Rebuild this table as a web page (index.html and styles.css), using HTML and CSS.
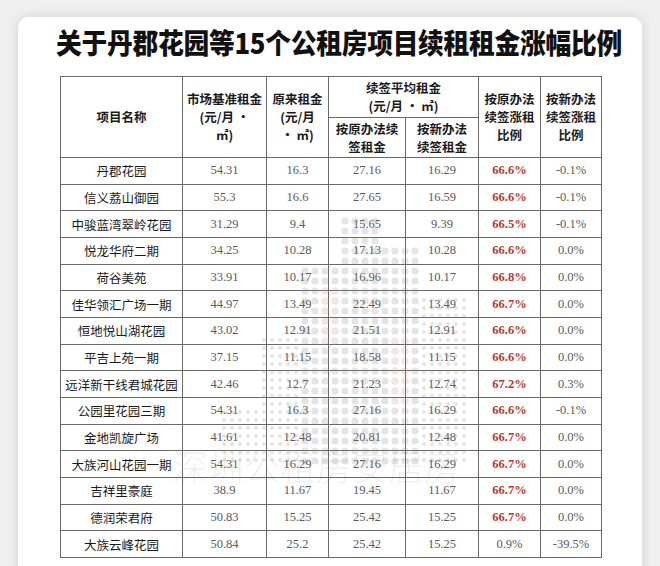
FILE: index.html
```html
<!DOCTYPE html>
<html lang="zh">
<head>
<meta charset="utf-8">
<link rel="stylesheet" href="styles.css">
</head>
<body>
<div class="card">
  <h1 class="title">关于丹郡花园等15个公租房项目续租租金涨幅比例</h1>
  <div class="table-wrap">
    <table class="rent">
      <colgroup>
        <col class="c1"><col class="c2"><col class="c3"><col class="c4"><col class="c5"><col class="c6"><col class="c7">
      </colgroup>
      <thead>
        <tr class="h1">
          <th rowspan="2">项目名称</th>
          <th rowspan="2">市场基准租金<br>(元/月 ·<br>㎡)</th>
          <th rowspan="2">原来租金<br>(元/月<br>· ㎡)</th>
          <th colspan="2">续签平均租金<br>(元/月 · ㎡)</th>
          <th rowspan="2">按原办法<br>续签涨租<br>比例</th>
          <th rowspan="2">按新办法<br>续签涨租<br>比例</th>
        </tr>
        <tr class="h2">
          <th>按原办法续<br>签租金</th>
          <th>按新办法<br>续签租金</th>
        </tr>
      </thead>
      <tbody>
        <tr><td class="name">丹郡花园</td><td>54.31</td><td>16.3</td><td>27.16</td><td>16.29</td><td class="red">66.6%</td><td>-0.1%</td></tr>
        <tr><td class="name">信义荔山御园</td><td>55.3</td><td>16.6</td><td>27.65</td><td>16.59</td><td class="red">66.6%</td><td>-0.1%</td></tr>
        <tr><td class="name">中骏蓝湾翠岭花园</td><td>31.29</td><td>9.4</td><td>15.65</td><td>9.39</td><td class="red">66.5%</td><td>-0.1%</td></tr>
        <tr><td class="name">悦龙华府二期</td><td>34.25</td><td>10.28</td><td>17.13</td><td>10.28</td><td class="red">66.6%</td><td>0.0%</td></tr>
        <tr><td class="name">荷谷美苑</td><td>33.91</td><td>10.17</td><td>16.96</td><td>10.17</td><td class="red">66.8%</td><td>0.0%</td></tr>
        <tr><td class="name">佳华领汇广场一期</td><td>44.97</td><td>13.49</td><td>22.49</td><td>13.49</td><td class="red">66.7%</td><td>0.0%</td></tr>
        <tr><td class="name">恒地悦山湖花园</td><td>43.02</td><td>12.91</td><td>21.51</td><td>12.91</td><td class="red">66.6%</td><td>0.0%</td></tr>
        <tr><td class="name">平吉上苑一期</td><td>37.15</td><td>11.15</td><td>18.58</td><td>11.15</td><td class="red">66.6%</td><td>0.0%</td></tr>
        <tr><td class="name">远洋新干线君城花园</td><td>42.46</td><td>12.7</td><td>21.23</td><td>12.74</td><td class="red">67.2%</td><td>0.3%</td></tr>
        <tr><td class="name">公园里花园三期</td><td>54.31</td><td>16.3</td><td>27.16</td><td>16.29</td><td class="red">66.6%</td><td>-0.1%</td></tr>
        <tr><td class="name">金地凯旋广场</td><td>41.61</td><td>12.48</td><td>20.81</td><td>12.48</td><td class="red">66.7%</td><td>0.0%</td></tr>
        <tr><td class="name">大族河山花园一期</td><td>54.31</td><td>16.29</td><td>27.16</td><td>16.29</td><td class="red">66.7%</td><td>0.0%</td></tr>
        <tr><td class="name">吉祥里豪庭</td><td>38.9</td><td>11.67</td><td>19.45</td><td>11.67</td><td class="red">66.7%</td><td>0.0%</td></tr>
        <tr><td class="name">德润荣君府</td><td>50.83</td><td>15.25</td><td>25.42</td><td>15.25</td><td class="red">66.7%</td><td>0.0%</td></tr>
        <tr><td class="name">大族云峰花园</td><td>50.84</td><td>25.2</td><td>25.42</td><td>15.25</td><td>0.9%</td><td>-39.5%</td></tr>
      </tbody>
    </table>
    <svg class="dots" width="260" height="250" viewBox="0 0 260 250" aria-hidden="true">
      <defs>
        <pattern id="dp" width="10" height="10" patternUnits="userSpaceOnUse">
          <circle cx="5" cy="5" r="3.6" fill="#8a8a8a"/>
        </pattern>
        <pattern id="dpr" width="10" height="10" patternUnits="userSpaceOnUse">
          <circle cx="5" cy="5" r="3.6" fill="#d08a80"/>
        </pattern>
        <pattern id="dps" width="8" height="8" patternUnits="userSpaceOnUse">
          <circle cx="4" cy="4" r="2" fill="#8a8a8a"/>
        </pattern>
      </defs>
      <rect x="120" y="0" width="40" height="250" fill="url(#dp)"/>
      <rect x="80" y="50" width="40" height="200" fill="url(#dp)"/>
      <rect x="100" y="70" width="20" height="60" fill="url(#dpr)"/>
      <rect x="160" y="30" width="40" height="220" fill="url(#dp)"/>
      <rect x="170" y="120" width="20" height="70" fill="url(#dpr)"/>
      <rect x="40" y="120" width="40" height="130" fill="url(#dps)"/>
      <rect x="200" y="80" width="48" height="170" fill="url(#dps)"/>
      <rect x="0" y="190" width="40" height="60" fill="url(#dps)"/>
    </svg>
    <div class="watermark">深圳公租房安居房</div>
  </div>
</div>
</body>
</html>
```

FILE: styles.css
```css
html, body {
  margin: 0;
  padding: 0;
}
body {
  background: #efefef;
  width: 660px;
  height: 566px;
  overflow: hidden;
}
.card {
  margin: 17px 0 0 18px;
  width: 624px;
  height: 620px;
  background: #ffffff;
  border-radius: 10px;
  box-shadow: 0 0 12px rgba(0, 0, 0, 0.13);
  overflow: hidden;
}
.title {
  margin: 8px 0 0 0;
  padding-left: 38px;
  font-family: "Noto Sans CJK SC", "Noto Sans", sans-serif;
  font-weight: 900;
  font-size: 28px;
  line-height: 34px;
  color: #111;
  letter-spacing: -0.3px;
  white-space: nowrap;
  transform: scaleX(0.92);
  transform-origin: 38px 50%;
}
.table-wrap {
  position: relative;
  margin: 17px 0 0 42px;
  width: 541px;
}
.rent {
  border-collapse: collapse;
  width: 541px;
  table-layout: fixed;
}
.c1 { width: 122px; }
.c2 { width: 84px; }
.c3 { width: 62px; }
.c4 { width: 77px; }
.c5 { width: 73px; }
.c6 { width: 62px; }
.c7 { width: 61px; }
.rent th, .rent td {
  border: 1px solid #6a6a6a;
  padding: 0;
  text-align: center;
  vertical-align: middle;
}
.rent th {
  font-family: "Noto Sans CJK SC", "Noto Sans", sans-serif;
  font-weight: 700;
  font-size: 12.5px;
  line-height: 18px;
  color: #1a1a1a;
}
.h1 { height: 41px; }
.h2 { height: 40px; }
.rent tbody tr { height: 26.67px; }
.rent td {
  font-family: "Liberation Serif", "Noto Sans CJK SC", serif;
  font-size: 12.5px;
  color: #5a5a5a;
}
.rent td.name {
  color: #1a1a1a;
  font-size: 12.5px;
}
.rent td.red {
  color: #b8372c;
  font-weight: 700;
}
.dots {
  position: absolute;
  left: 160px;
  top: 140px;
  opacity: 0.22;
  pointer-events: none;
}
.watermark {
  position: absolute;
  left: 112px;
  top: 369px;
  font-family: "Noto Sans CJK SC", serif;
  font-weight: 300;
  font-size: 36px;
  letter-spacing: 0px;
  line-height: 40px;
  color: rgba(0, 0, 0, 0.07);
  white-space: nowrap;
  pointer-events: none;
}
```
